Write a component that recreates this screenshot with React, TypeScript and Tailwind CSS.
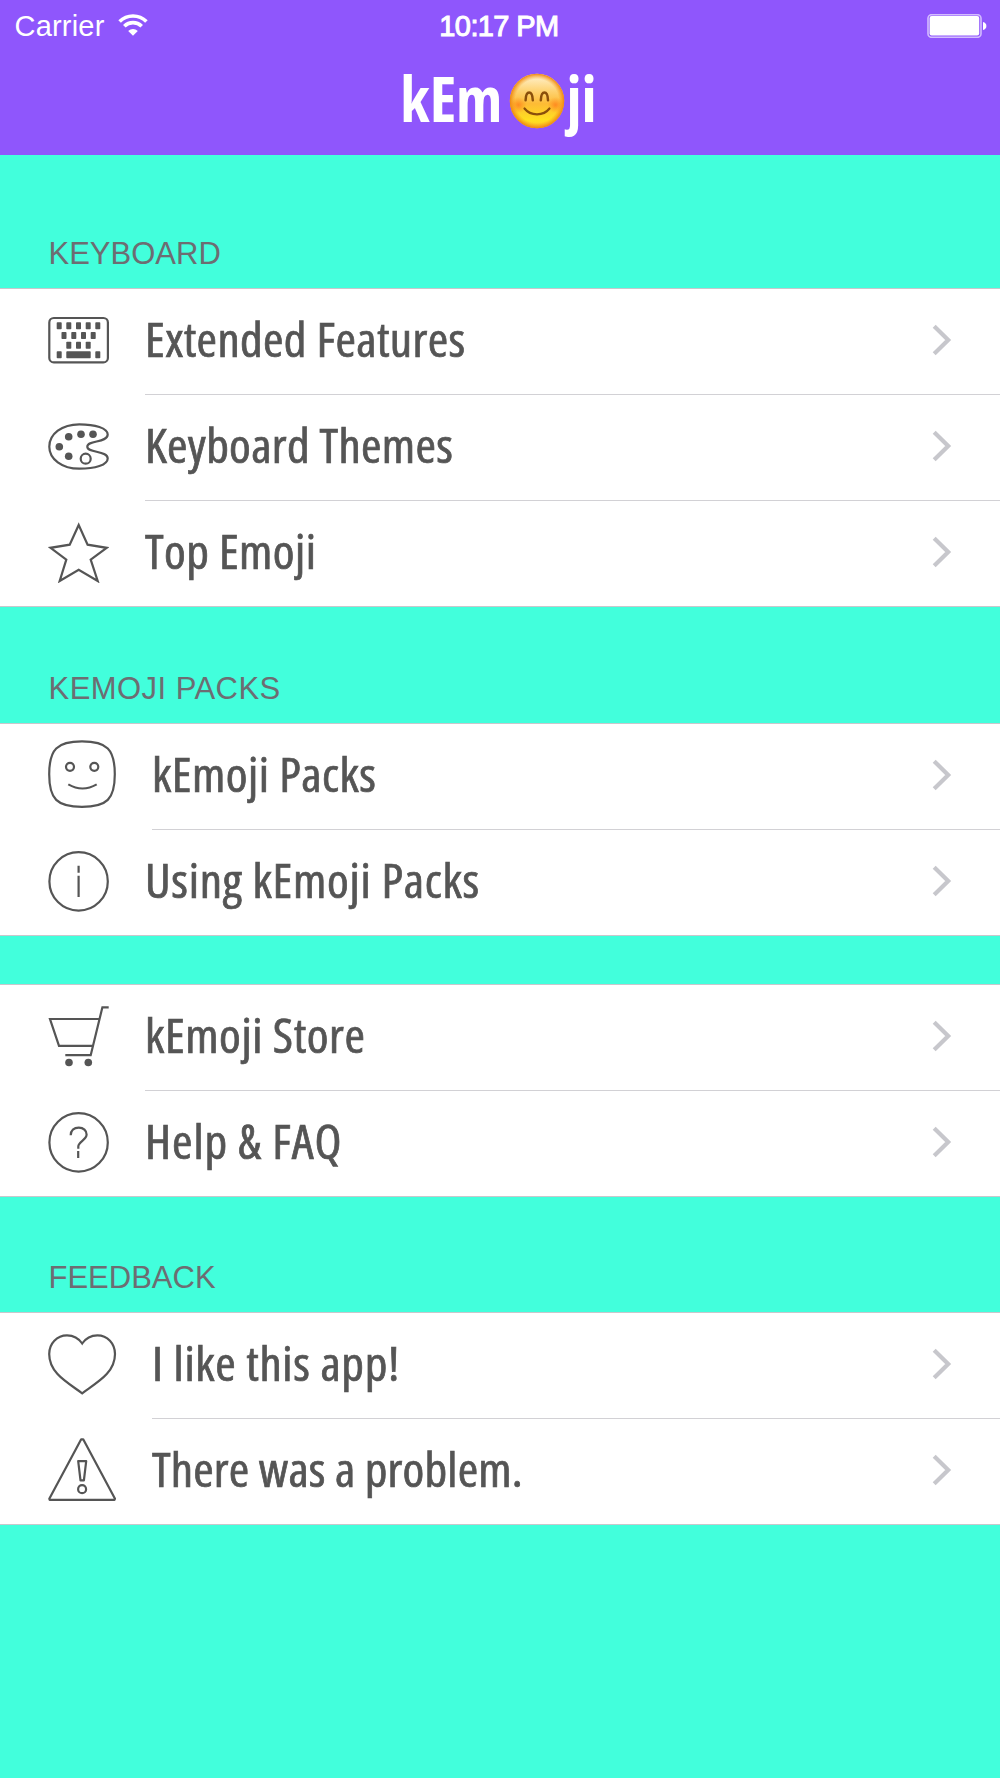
import { type ReactNode } from 'react'

type Row = { label: string; icon: ReactNode; tracking: string }

function Icon({ wide, children }: { wide?: boolean; children: ReactNode }) {
  return (
    <svg
      viewBox={wide ? '0 0 68 68' : '0 0 61 61'}
      className={wide ? 'h-[68px] w-[68px] shrink-0 overflow-visible' : 'h-[61px] w-[61px] shrink-0'}
      fill="none"
      stroke="#555555"
      strokeWidth="2.2"
    >
      {children}
    </svg>
  )
}

function KeyboardIcon() {
  const keys = [
    ...[8.7, 18.3, 28, 37.7, 47.3].map((x) => [x, 12.3]),
    ...[13.5, 23.3, 33, 42.7].map((x) => [x, 22]),
    ...[18.3, 28, 37.7].map((x) => [x, 31.7]),
    ...[8.7, 47.3].map((x) => [x, 41.3]),
  ]

  return (
    <Icon>
      <rect x="1.3" y="8" width="58.6" height="44.4" rx="4.5" />
      <g fill="#555555" stroke="none">
        {keys.map(([x, y]) => (
          <rect key={`${x}-${y}`} x={x} y={y} width="5" height="7" rx="0.8" />
        ))}
        <rect x="18.3" y="41.3" width="24.4" height="7" rx="0.8" />
      </g>
    </Icon>
  )
}

function PaletteIcon() {
  return (
    <Icon>
      <path d="M31.3 8.3C47 8.3 59.7 12 59.7 18.5C59.7 27 39.3 24 39.3 30.7C39.3 37 59.7 34.5 59.7 42.5C59.7 49 47 52.7 31.3 52.7C14 52.7 1.3 43 1.3 30.7C1.3 18 14 8.3 31.3 8.3Z" />
      <g fill="#555555" stroke="none">
        <circle cx="20.7" cy="20.7" r="3.8" />
        <circle cx="33" cy="18.3" r="3.8" />
        <circle cx="45" cy="18.3" r="3.8" />
        <circle cx="11.3" cy="30.7" r="3.8" />
        <circle cx="20.7" cy="40.3" r="3.8" />
      </g>
      <circle cx="37.7" cy="42.7" r="5" />
    </Icon>
  )
}

function StarIcon() {
  return (
    <Icon>
      <path d="M30.7 3L39.6 22.7L58.6 25.8L42.7 37.7L49.7 59L30.7 47.7L11.7 59L18.3 37.7L2.6 25.8L21.7 22.7Z" />
    </Icon>
  )
}

function SmileyIcon() {
  return (
    <Icon wide>
      <g transform="translate(0 -2.8)">
        <path d="M34 2.2C59 2.2 66.8 10 66.8 35C66.8 60 59 67.6 34 67.6C9 67.6 1.2 60 1.2 35C1.2 10 9 2.2 34 2.2Z" />
        <circle cx="22" cy="27.6" r="4" />
        <circle cx="46.3" cy="27.6" r="4" />
        <path d="M20.3 45.2Q34.5 53.4 48.7 45.2" />
      </g>
    </Icon>
  )
}

function InfoIcon() {
  return (
    <Icon>
      <circle cx="30.6" cy="30.4" r="29.2" />
      <path d="M30.6 14.7v7M30.6 24.7v21.3" />
    </Icon>
  )
}

function CartIcon() {
  return (
    <Icon>
      <path d="M60.7 1.3H54.4L42.7 49.2H17.3M51.3 13H2L11 39.8H44.7" />
      <g fill="#555555" stroke="none">
        <circle cx="21" cy="56.5" r="3.8" />
        <circle cx="40.3" cy="56.5" r="3.8" />
      </g>
    </Icon>
  )
}

function HelpIcon() {
  return (
    <Icon>
      <circle cx="30.6" cy="30.4" r="29.2" />
      <path d="M22.7 23.3C22.7 18.5 26 15.6 30.8 15.6C35.5 15.6 38.6 18.6 38.6 22.6C38.6 28 30.3 29.5 30.3 34.5V36.8M30.2 39v7" />
    </Icon>
  )
}

function HeartIcon() {
  return (
    <Icon wide>
      <path d="M34.2 12.5C30.5 7 25 4.3 19 4.3C9 4.3 1.2 12.5 1.2 23C1.2 41.5 18 50.5 34.2 62.3C50.4 50.5 67 41.5 67 23C67 12.5 59.4 4.3 49.4 4.3C43.4 4.3 37.9 7 34.2 12.5Z" />
    </Icon>
  )
}

function WarningIcon() {
  return (
    <Icon wide>
      <g strokeLinejoin="round" transform="translate(0 0.7)">
        <path d="M33.2 2.6h2L67 62L66.5 63.2H1.7L1.3 62Z" />
        <path d="M30.2 24.5h8L35.9 43.7h-3.4Z" />
        <circle cx="34.1" cy="52.5" r="4" />
      </g>
    </Icon>
  )
}

function Chevron() {
  return (
    <svg viewBox="0 0 20 32" className="h-8 w-5 shrink-0" fill="none" stroke="#c7c7cc" strokeWidth="4.2">
      <path d="M2.2 2.2L16.2 16L2.2 29.8" />
    </svg>
  )
}

function Group({ rows }: { rows: Row[] }) {
  return (
    <ul className="border-t border-[#c8c7cc] bg-white">
      {rows.map((row, i) => {
        const last = i === rows.length - 1
        return (
          <li
            key={row.label}
            className={`flex h-[106px] gap-9 pl-12 ${last ? 'border-b border-[#c8c7cc]' : ''}`}
          >
            <div className="flex items-center pb-[3px]">{row.icon}</div>
            <div
              className={`flex flex-1 items-center justify-between pr-12 pb-[3px] ${last ? '' : 'border-b border-[#d2d1d5]'}`}
            >
              <span
                className={`origin-left scale-x-103 pb-0.5 font-['Open_Sans',sans-serif] text-[48px] leading-[64px] whitespace-nowrap text-[#555555] [-webkit-text-stroke:0.7px_#555555] [font-stretch:75%] ${row.tracking}`}
              >
                {row.label}
              </span>
              <Chevron />
            </div>
          </li>
        )
      })}
    </ul>
  )
}

function SectionTitle({ className, children }: { className: string; children: ReactNode }) {
  return (
    <h2 className={`flex items-end pb-4 pl-[48.5px] text-[31px] leading-[36px] text-[#6d6d72] ${className}`}>
      {children}
    </h2>
  )
}

function BlushEmoji() {
  return (
    <svg viewBox="0 0 56 56" className="h-14 w-14 shrink-0">
      <defs>
        <linearGradient id="face" x1="0" y1="0" x2="0" y2="1">
          <stop offset="0" stopColor="#fff3d6" />
          <stop offset="0.3" stopColor="#fed476" />
          <stop offset="0.55" stopColor="#fdbb35" />
          <stop offset="0.85" stopColor="#ffe01f" />
          <stop offset="1" stopColor="#fdc82a" />
        </linearGradient>
        <radialGradient id="rim">
          <stop offset="0.8" stopColor="#f59a1b" stopOpacity="0" />
          <stop offset="1" stopColor="#ee8512" />
        </radialGradient>
        <radialGradient id="cheek">
          <stop offset="0" stopColor="#ff7a1c" stopOpacity="0.75" />
          <stop offset="1" stopColor="#ff8a1c" stopOpacity="0" />
        </radialGradient>
      </defs>
      <circle cx="28" cy="28" r="27.2" fill="url(#face)" />
      <circle cx="28" cy="28" r="27.2" fill="url(#rim)" />
      <circle cx="9.5" cy="32" r="8" fill="url(#cheek)" />
      <circle cx="46.5" cy="32" r="8" fill="url(#cheek)" />
      <g fill="none" stroke="#8a4f0b" strokeLinecap="round">
        <path d="M16.6 27.2C17 17 23.3 17 23.8 27.2M31.8 27.2C32.3 17 38.6 17 39 27.2" strokeWidth="2.5" />
        <path d="M15.5 35.5C21.5 43.2 34.5 43.2 40.5 35.5" strokeWidth="2.2" />
      </g>
    </svg>
  )
}

function StatusBar() {
  return (
    <div className="grid h-[50px] grid-cols-3 items-center text-[29px] leading-[50px]">
      <div className="flex items-center gap-[13px] pl-[14.5px]">
        <span className="pt-px tracking-[0.2px]">Carrier</span>
        <svg viewBox="0 0 30 22" className="-mt-0.5 h-[22px] w-[30px]" fill="none" stroke="white">
          <path d="M1.6 7.6C9 0.1 21 0.1 28.4 7.6" strokeWidth="3.6" />
          <path d="M6.3 12.3C11.2 7.4 18.8 7.4 23.7 12.3" strokeWidth="3.6" />
          <path d="M15 21.8L10.2 17C13 14.2 17 14.2 19.8 17Z" fill="white" stroke="none" />
        </svg>
      </div>
      <span className="pt-px pr-0.5 text-center tracking-[-0.6px] [-webkit-text-stroke:1px_white]">10:17 PM</span>
      <div className="flex justify-end pr-[13px]">
        <svg viewBox="0 0 60 24" className="h-6 w-[60px]">
          <rect x="1" y="0.7" width="53" height="22.6" rx="3.5" fill="#8f56fc" stroke="#d3bcfe" strokeWidth="1.6" />
          <rect x="2.6" y="2" width="49.6" height="19.5" rx="2" fill="white" />
          <path d="M56 8c2.2 0.6 3.4 2 3.4 4s-1.2 3.4-3.4 4Z" fill="white" />
        </svg>
      </div>
    </div>
  )
}

const keyboardRows: Row[] = [
  { label: 'Extended Features', icon: <KeyboardIcon />, tracking: 'tracking-[0.37px]' },
  { label: 'Keyboard Themes', icon: <PaletteIcon />, tracking: 'tracking-[0.32px]' },
  { label: 'Top Emoji', icon: <StarIcon />, tracking: 'tracking-[0.43px]' },
]

const packRows: Row[] = [
  { label: 'kEmoji Packs', icon: <SmileyIcon />, tracking: 'tracking-[0.47px]' },
  { label: 'Using kEmoji Packs', icon: <InfoIcon />, tracking: 'tracking-[0.72px]' },
]

const storeRows: Row[] = [
  { label: 'kEmoji Store', icon: <CartIcon />, tracking: 'tracking-[0.55px]' },
  { label: 'Help & FAQ', icon: <HelpIcon />, tracking: 'tracking-[0.9px]' },
]

const feedbackRows: Row[] = [
  { label: 'I like this app!', icon: <HeartIcon />, tracking: 'tracking-[0.65px]' },
  { label: 'There was a problem.', icon: <WarningIcon />, tracking: 'tracking-[0.17px]' },
]

export default function App() {
  return (
    <div className="min-h-[1778px] bg-[#42ffdc] font-['Liberation_Sans',Arial,sans-serif]">
      <header className="h-[155px] bg-[#8f56fc] text-white">
        <StatusBar />
        <h1 className="flex h-[105px] items-center justify-center pr-[3px] pb-[3px] font-['Open_Sans',sans-serif] text-[62px] font-bold [font-stretch:75%]">
          <span className="pr-[7px] pb-[5px]">kEm</span>
          <BlushEmoji />
          <span className="pb-[5px] pl-px">ji</span>
        </h1>
      </header>

      <main>
        <SectionTitle className="h-[133px]">KEYBOARD</SectionTitle>
        <Group rows={keyboardRows} />

        <SectionTitle className="h-[116px] tracking-[0.45px]">KEMOJI PACKS</SectionTitle>
        <Group rows={packRows} />

        <div className="pt-12">
          <Group rows={storeRows} />
        </div>

        <SectionTitle className="h-[115px]">FEEDBACK</SectionTitle>
        <Group rows={feedbackRows} />
      </main>
    </div>
  )
}
